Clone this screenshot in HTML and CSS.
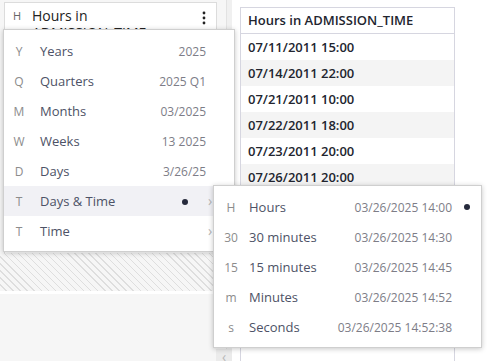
FILE: index.html
```html
<!DOCTYPE html>
<html lang="en">
<head>
    <meta charset="UTF-8">
    <title>Hours in ADMISSION_TIME</title>
    <link rel="stylesheet" href="styles.css">
</head>
<body>
    <div class="app">
        <aside class="sidebar">
            <div class="field-card">
                <div class="field-head">
                    <span class="field-type">H</span>
                    <span class="field-name">Hours in ADMISSION_TIME</span>
                    <svg class="kebab" width="4" height="14" viewBox="0 0 4 14">
                        <circle cx="2" cy="2" r="1.4"/>
                        <circle cx="2" cy="7" r="1.4"/>
                        <circle cx="2" cy="12" r="1.4"/>
                    </svg>
                </div>
            </div>
            <div class="drop-zone"></div>
            <div class="sidebar-rest"></div>
        </aside>
        <div class="splitter"></div>
        <main class="results">
            <div class="grid">
                <div class="grid-head">Hours in ADMISSION_TIME</div>
                <div class="grid-row">07/11/2011 15:00</div>
                <div class="grid-row">07/14/2011 22:00</div>
                <div class="grid-row">07/21/2011 10:00</div>
                <div class="grid-row">07/22/2011 18:00</div>
                <div class="grid-row">07/23/2011 20:00</div>
                <div class="grid-row">07/26/2011 20:00</div>
                <div class="grid-row">07/28/2011 09:00</div>
                <div class="grid-row">07/30/2011 14:00</div>
                <div class="grid-row">08/02/2011 11:00</div>
                <div class="grid-row">08/04/2011 16:00</div>
                <div class="grid-row">08/08/2011 07:00</div>
                <div class="grid-row">08/11/2011 12:00</div>
            </div>
        </main>

        <button class="collapse">&lsaquo;</button>

        <ul class="menu level-menu">
            <li class="menu-item"><span class="key">Y</span><span class="label">Years</span><span class="value">2025</span><span class="tail"></span></li>
            <li class="menu-item"><span class="key">Q</span><span class="label">Quarters</span><span class="value">2025 Q1</span><span class="tail"></span></li>
            <li class="menu-item"><span class="key">M</span><span class="label">Months</span><span class="value">03/2025</span><span class="tail"></span></li>
            <li class="menu-item"><span class="key">W</span><span class="label">Weeks</span><span class="value">13 2025</span><span class="tail"></span></li>
            <li class="menu-item"><span class="key">D</span><span class="label">Days</span><span class="value">3/26/25</span><span class="tail"></span></li>
            <li class="menu-item active"><span class="key">T</span><span class="label">Days &amp; Time</span><span class="value"><span class="dot"></span></span><span class="tail"><span class="chevron">&rsaquo;</span></span></li>
            <li class="menu-item"><span class="key">T</span><span class="label">Time</span><span class="value"></span><span class="tail"><span class="chevron">&rsaquo;</span></span></li>
        </ul>

        <ul class="menu sub-menu">
            <li class="menu-item"><span class="key">H</span><span class="label">Hours</span><span class="value">03/26/2025 14:00</span><span class="tail"><span class="dot"></span></span></li>
            <li class="menu-item"><span class="key">30</span><span class="label">30 minutes</span><span class="value">03/26/2025 14:30</span><span class="tail"></span></li>
            <li class="menu-item"><span class="key">15</span><span class="label">15 minutes</span><span class="value">03/26/2025 14:45</span><span class="tail"></span></li>
            <li class="menu-item"><span class="key">m</span><span class="label">Minutes</span><span class="value">03/26/2025 14:52</span><span class="tail"></span></li>
            <li class="menu-item"><span class="key">s</span><span class="label">Seconds</span><span class="value">03/26/2025 14:52:38</span><span class="tail"></span></li>
        </ul>
    </div>
</body>
</html>
```

FILE: styles.css
```css
html, body {
    margin: 0;
    padding: 0;
}
body {
    font-family: 'Open Sans', 'Noto Sans', sans-serif;
    background-color: #fff;
    color: #22252f;
}
.app {
    position: relative;
    display: flex;
    width: 488px;
    height: 361px;
    overflow: hidden;
}
.sidebar {
    width: 226px;
    flex-shrink: 0;
    display: flex;
    flex-direction: column;
    background-color: #f6f6f6;
}
.field-card {
    margin: 2px 9px 0 4px;
    height: 250px;
    background-color: #fff;
    border: 1px solid #dcdcdc;
    border-bottom: none;
}
.field-head {
    display: flex;
    align-items: flex-start;
    padding: 4px 10px 0 8px;
}
.field-type {
    width: 19px;
    font-size: 11px;
    line-height: 18px;
    color: #666;
}
.field-name {
    flex: 1;
    font-size: 14px;
    line-height: 17px;
    color: #222;
}
.kebab {
    margin-top: 4px;
    fill: #222;
}
.drop-zone {
    height: 38px;
    background-color: #f6f6f6;
    background-image: repeating-linear-gradient(45deg, transparent 0 4px, #dedede 4px 5px);
    border-bottom: 3px solid #fff;
}
.sidebar-rest {
    flex: 1;
}
.splitter {
    width: 5px;
    flex-shrink: 0;
    background-color: #f0f0f0;
    border-left: 1px solid #e2e2e2;
}
.results {
    flex: 1;
    padding: 7px 0 0 8px;
    background-color: #fff;
}
.grid {
    width: 213px;
    border: 1px solid #d6d6e0;
    border-bottom: none;
    height: 400px;
    font-size: 13px;
    font-weight: 600;
    color: #22252f;
}
.grid-head {
    height: 25px;
    line-height: 25px;
    padding-left: 7px;
    border-bottom: 1px solid #d6d6e0;
}
.grid-row {
    height: 26px;
    line-height: 26px;
    padding-left: 7px;
}
.grid-row:nth-child(odd) {
    background-color: #f4f4f4;
}
.collapse {
    position: absolute;
    left: 216px;
    top: 349px;
    width: 16px;
    height: 16px;
    padding: 0;
    border: none;
    background-color: #ebebeb;
    color: #b8b8b8;
    font-family: 'Open Sans', sans-serif;
    font-size: 14px;
    line-height: 12px;
    text-align: center;
}
.menu {
    position: absolute;
    margin: 0;
    list-style: none;
    background-color: #fff;
    border: 1px solid #cfcfcf;
    box-shadow: 0 1px 5px rgba(0, 0, 0, 0.22);
}
.level-menu {
    left: 3px;
    top: 29px;
    width: 230px;
    padding: 6px 0 5px;
}
.sub-menu {
    left: 213px;
    top: 185px;
    width: 267px;
    padding: 6px 0 5px;
}
.menu-item {
    display: grid;
    grid-template-columns: 30px 1fr auto 28px;
    align-items: center;
    height: 30px;
}
.sub-menu .menu-item {
    grid-template-columns: 34px 1fr auto 29px;
}
.menu-item.active {
    background-color: #f1f1f5;
}
.key {
    text-align: center;
    font-size: 12px;
    color: #8c8c8c;
}
.label {
    margin-left: 6px;
    font-size: 13px;
    color: #4d5266;
}
.sub-menu .label {
    margin-left: 1px;
}
.value {
    font-size: 12px;
    color: #7d7d87;
    text-align: right;
}
.tail {
    display: flex;
    align-items: center;
    justify-content: center;
}
.level-menu .tail {
    justify-content: flex-start;
    padding-left: 2px;
}
.dot {
    display: inline-block;
    width: 6px;
    height: 6px;
    border-radius: 50%;
    background-color: #262a3c;
}
.level-menu .dot {
    margin-right: 18px;
    vertical-align: middle;
}
.chevron {
    font-size: 14px;
    color: #b4b4b4;
    line-height: 14px;
}
```
